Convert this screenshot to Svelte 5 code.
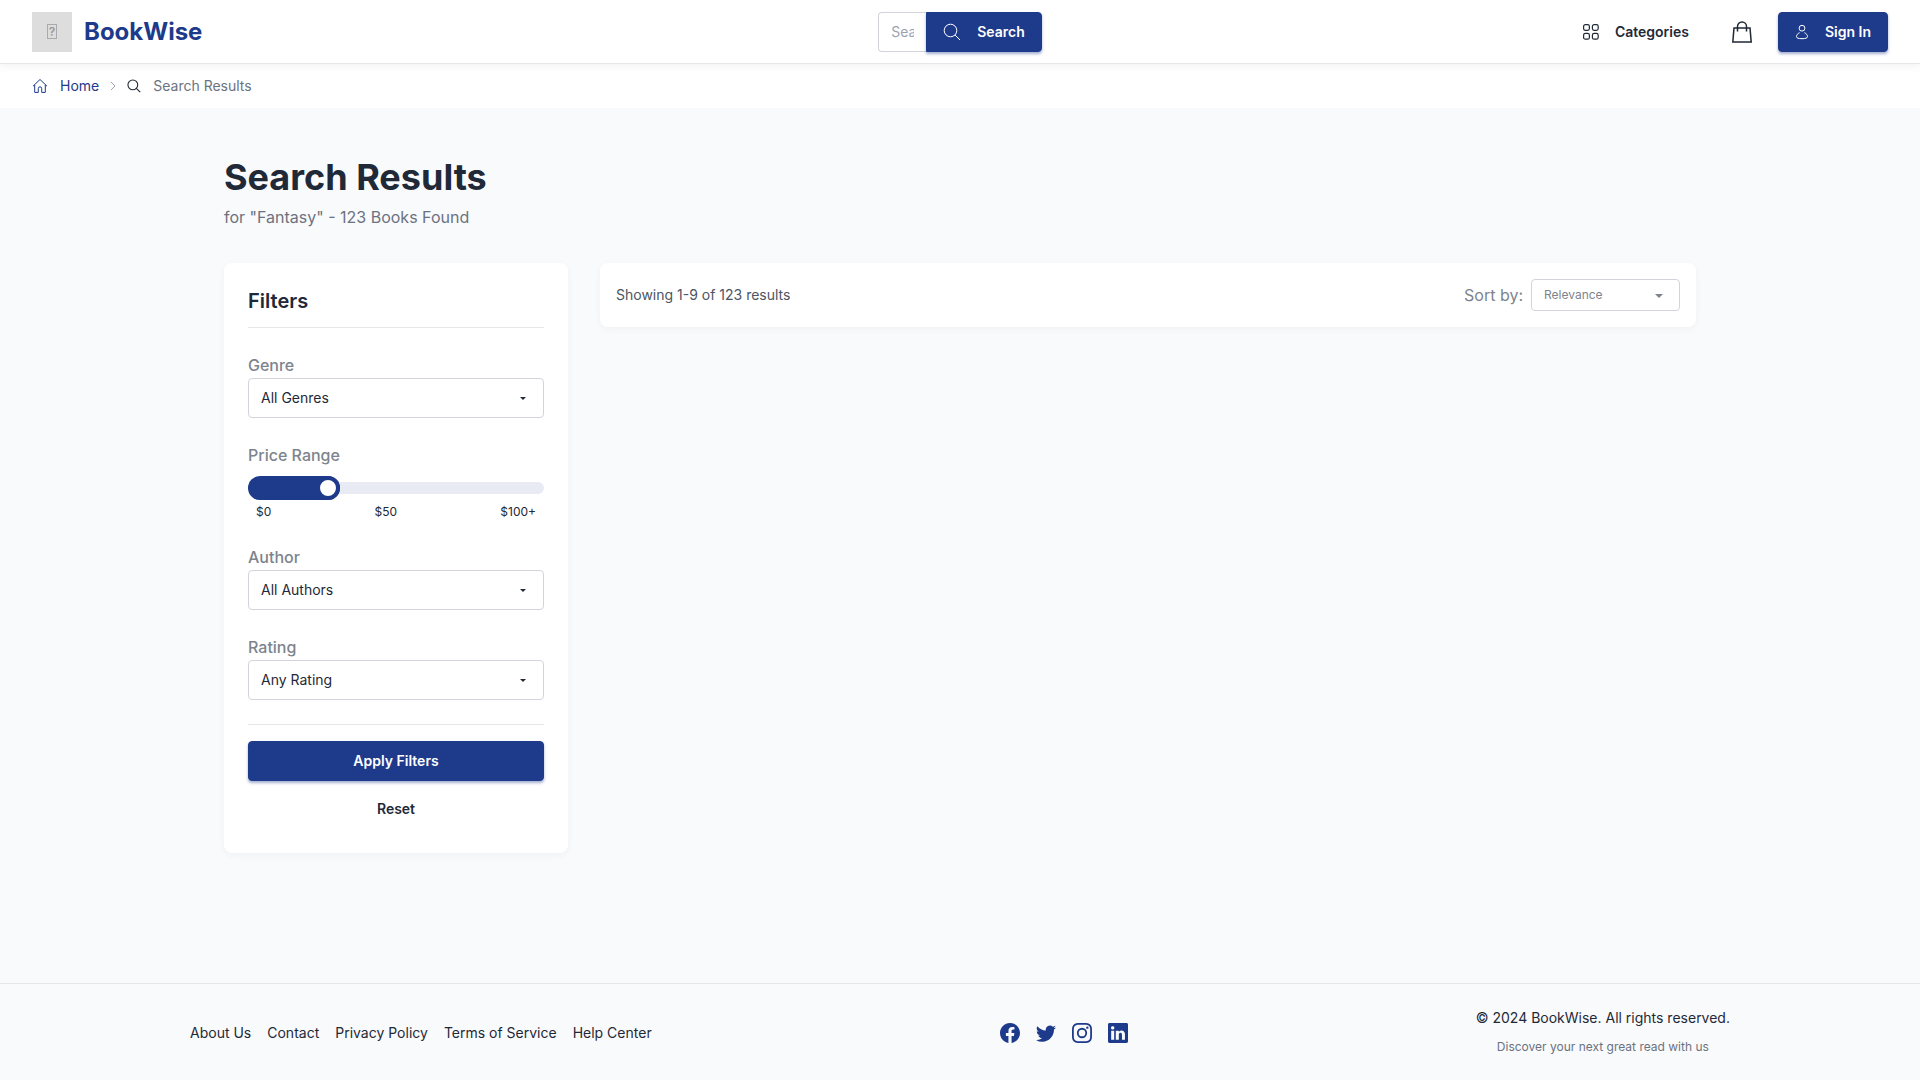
<script>
  const filters = [
    { id: 'genre', label: 'Genre', options: ['All Genres'] },
    { id: 'price', label: 'Price Range' },
    { id: 'author', label: 'Author', options: ['All Authors'] },
    { id: 'rating', label: 'Rating', options: ['Any Rating'] },
  ];
  const footerLinks = ['About Us', 'Contact', 'Privacy Policy', 'Terms of Service', 'Help Center'];
  const socials = [
    { name: 'Facebook', d: 'M16 8.05C16 3.6 12.42 0 8 0S0 3.6 0 8.05C0 12.07 2.93 15.4 6.75 16v-5.62H4.72V8.05h2.03V6.28c0-2.02 1.2-3.13 3.02-3.13.88 0 1.8.16 1.8.16v1.98h-1.01c-1 0-1.31.62-1.31 1.26v1.5h2.22l-.35 2.33H9.25V16C13.07 15.4 16 12.07 16 8.05' },
    { name: 'Twitter', d: 'M5.03 15c6.04 0 9.34-5 9.34-9.33q.002-.212-.006-.422A6.7 6.7 0 0 0 16 3.54a6.7 6.7 0 0 1-1.89.52 3.3 3.3 0 0 0 1.45-1.82 6.5 6.5 0 0 1-2.09.79A3.29 3.29 0 0 0 7.88 6.03 9.32 9.32 0 0 1 1.11 2.6 3.29 3.29 0 0 0 2.13 6.98 3.2 3.2 0 0 1 .64 6.57v.04a3.29 3.29 0 0 0 2.63 3.22 3.2 3.2 0 0 1-.86.12 3 3 0 0 1-.62-.06 3.29 3.29 0 0 0 3.07 2.28A6.6 6.6 0 0 1 0 13.53 9.3 9.3 0 0 0 5.03 15' },
    { name: 'Instagram', d: 'M8 0C5.83 0 5.56.01 4.7.05 3.85.09 3.27.22 2.76.42A3.9 3.9 0 0 0 1.34 1.34 3.9 3.9 0 0 0 .42 2.76C.22 3.27.09 3.85.05 4.7.01 5.56 0 5.83 0 8s.01 2.44.05 3.3c.04.85.17 1.43.37 1.94.2.53.47.97.92 1.42.45.45.89.72 1.42.92.51.2 1.09.33 1.94.37C5.56 15.99 5.83 16 8 16s2.44-.01 3.3-.05c.85-.04 1.43-.17 1.94-.37a3.9 3.9 0 0 0 1.42-.92c.45-.45.72-.89.92-1.42.2-.51.33-1.09.37-1.94.04-.86.05-1.13.05-3.3s-.01-2.44-.05-3.3c-.04-.85-.17-1.43-.37-1.94a3.9 3.9 0 0 0-.92-1.42A3.9 3.9 0 0 0 13.24.42C12.73.22 12.15.09 11.3.05 10.44.01 10.17 0 8 0m0 1.44c2.14 0 2.39.01 3.23.05.78.04 1.2.17 1.49.28.37.14.64.32.92.6s.45.55.6.92c.11.28.24.7.28 1.49.04.84.05 1.09.05 3.23s-.01 2.39-.05 3.23c-.04.78-.17 1.2-.28 1.49-.14.37-.32.64-.6.92s-.55.45-.92.6c-.28.11-.7.24-1.49.28-.84.04-1.09.05-3.23.05s-2.39-.01-3.23-.05c-.78-.04-1.2-.17-1.49-.28a2.5 2.5 0 0 1-.92-.6 2.5 2.5 0 0 1-.6-.92c-.11-.28-.24-.7-.28-1.49-.04-.84-.05-1.09-.05-3.23s.01-2.39.05-3.23c.04-.78.17-1.2.28-1.49.14-.37.32-.64.6-.92s.55-.45.92-.6c.28-.11.7-.24 1.49-.28.84-.04 1.09-.05 3.23-.05m4.27 1.33a.96.96 0 1 0 0 1.92.96.96 0 0 0 0-1.92M8 3.89a4.11 4.11 0 1 0 0 8.22 4.11 4.11 0 0 0 0-8.22m0 1.44a2.67 2.67 0 1 1 0 5.34 2.67 2.67 0 0 1 0-5.34' },
    { name: 'LinkedIn', d: 'M0 1.15C0 .51.53 0 1.18 0h13.64C15.47 0 16 .51 16 1.15v13.7c0 .63-.53 1.15-1.18 1.15H1.18C.53 16 0 15.48 0 14.85zm4.94 12.24V6.17h-2.4v7.22zM3.74 5.18c.84 0 1.36-.55 1.36-1.25-.02-.7-.52-1.24-1.34-1.24s-1.36.54-1.36 1.25c0 .69.52 1.24 1.33 1.24zm4.91 8.21V9.36c0-.21.02-.43.08-.59.17-.43.57-.88 1.23-.88.86 0 1.21.66 1.21 1.63v3.87h2.4V9.25c0-2.22-1.18-3.25-2.76-3.25-1.28 0-1.84.7-2.16 1.19v.03h-.02l.02-.03V6.17h-2.4c.03.68 0 7.22 0 7.22z' },
  ];
  let price = $state(25);
  // The fill ends at the outer edge of the 24px thumb.
  const fill = $derived(`calc(24px + (100% - 24px) * ${price / 100})`);
</script>

{#snippet searchIcon(cls)}
  <svg class={cls} viewBox="0 0 18 18" aria-hidden="true"><circle cx="7.5" cy="7.5" r="6.3" /><path d="M12 12l5 5" /></svg>
{/snippet}

<div class="page">
  <header class="header">
    <a class="brand" href="/">
      <span class="logo" aria-hidden="true"><span class="glyph">?</span></span>
      <span class="name">BookWise</span>
    </a>
    <form class="search" onsubmit={(e) => e.preventDefault()}>
      <input type="text" placeholder="Search for books" aria-label="Search for books" />
      <button class="btn primary" type="submit">{@render searchIcon('icon-search')}Search</button>
    </form>
    <nav class="actions" aria-label="Main">
      <button class="btn plain" type="button">
        <svg class="icon-grid" viewBox="0 0 16 16" aria-hidden="true">
          <rect x=".6" y=".6" width="5.8" height="5.8" rx="1.8" /><rect x="9.4" y=".6" width="5.8" height="5.8" rx="1.8" />
          <rect x=".6" y="9.4" width="5.8" height="5.8" rx="1.8" /><rect x="9.4" y="9.4" width="5.8" height="5.8" rx="1.8" />
        </svg>
        Categories
      </button>
      <button class="btn bag" type="button" aria-label="Cart">
        <svg viewBox="0 0 24 24" aria-hidden="true"><path d="M4 8h16l1.2 14H2.8zM7.5 11.500V6.500a4.500 4.500 0 0 1 9 0v5" /></svg>
      </button>
      <button class="btn primary" type="button">
        <svg class="icon-user" viewBox="0 0 14 16" aria-hidden="true"><circle cx="7" cy="4.200" r="2.900" /><path d="M4.600 8.700C2.600 9.600 1.500 11 1.500 12.700c0 1.300 2 2 5.500 2s5.500-.7 5.500-2c0-1.700-1.100-3.100-3.100-4" /></svg>
        Sign In
      </button>
    </nav>
  </header>

  <nav class="crumbs" aria-label="Breadcrumb">
    <a href="/">
      <svg class="icon-home" viewBox="0 0 16 16" aria-hidden="true"><path d="M1 8.200L8 1.500l7 6.700M2.700 7v7.400h3.600V10.500a1.700 1.700 0 0 1 3.400 0v3.900h3.600V7" /></svg>
      Home
    </a>
    <svg class="icon-chevron" viewBox="0 0 6 10" aria-hidden="true"><path d="M1 1l4 4-4 4" /></svg>
    <span>{@render searchIcon('icon-crumb')}Search Results</span>
  </nav>

  <main>
    <h1>Search Results</h1>
    <p class="summary">for "Fantasy" - 123 Books Found</p>
    <div class="columns">
      <aside class="card filters">
        <h2>Filters</h2>
        {#each filters as f (f.id)}
          <div class="field">
            <label for={f.id}>{f.label}</label>
            {#if f.options}
              <div class="select">
                <select id={f.id}>
                  {#each f.options as o (o)}<option>{o}</option>{/each}
                </select>
                <svg viewBox="0 0 8 6" aria-hidden="true"><path d="M1 2h6L4 5z" /></svg>
              </div>
            {:else}
              <div class="slider">
                <span class="track"></span>
                <span class="fill" style:width={fill}></span>
                <input id={f.id} type="range" min="0" max="100" bind:value={price} />
              </div>
              <div class="marks"><span>$0</span><span>$50</span><span>$100+</span></div>
            {/if}
          </div>
        {/each}
        <div class="buttons">
          <button class="btn primary" type="button">Apply Filters</button>
          <button class="btn plain" type="reset">Reset</button>
        </div>
      </aside>
      <section class="card toolbar">
        <span class="count">Showing 1-9 of 123 results</span>
        <div class="sort">
          <label for="sort">Sort by:</label>
          <div class="select small">
            <select id="sort"><option>Relevance</option></select>
            <svg viewBox="0 0 8 6" aria-hidden="true"><path d="M0 2h8L4 6z" /></svg>
          </div>
        </div>
      </section>
    </div>
  </main>

  <footer>
    <nav class="links" aria-label="Footer">
      {#each footerLinks as l (l)}<a href="/">{l}</a>{/each}
    </nav>
    <div class="socials">
      {#each socials as s (s.name)}
        <a href="/" aria-label={s.name}><svg viewBox="0 0 16 16" aria-hidden="true"><path fill-rule="evenodd" d={s.d} /></svg></a>
      {/each}
    </div>
    <div class="legal">
      <p>© 2024 BookWise. All rights reserved.</p>
      <p class="tagline">Discover your next great read with us</p>
    </div>
  </footer>
</div>

<style>
  :global(body) { margin: 0; }
  .page, .page * { box-sizing: border-box; }
  .page {
    min-height: 100vh;
    display: flex;
    flex-direction: column;
    background: #f9fafc;
    color: #1f2937;
    font: 14px/20px Inter, sans-serif;
  }
  h1, h2, p { margin: 0; }
  a { color: inherit; text-decoration: none; }
  button, input, select { font: inherit; color: inherit; margin: 0; }
  svg { display: block; flex: none; fill: none; stroke: currentColor; }

  .header {
    position: relative;
    display: grid;
    grid-template-columns: 1fr auto 1fr;
    align-items: center;
    height: 64px;
    padding: 0 32px;
    background: #fff;
    border-bottom: 1px solid #e5e7eb;
    box-shadow: 0 2px 8px rgba(0, 0, 0, 0.06);
  }
  .brand { display: flex; align-items: center; gap: 12px; }
  .logo {
    display: grid;
    place-items: center;
    width: 40px;
    height: 40px;
    background: #ddd;
    color: #999;
  }
  .glyph {
    width: 10px;
    height: 15px;
    border: 1px solid #aaa;
    font-size: 12px;
    line-height: 13px;
    font-weight: 600;
    text-align: center;
  }
  .name { color: #1e3a8a; font-size: 24px; line-height: 32px; font-weight: 700; }

  .btn {
    display: flex;
    align-items: center;
    justify-content: center;
    gap: 16px;
    height: 40px;
    padding: 0 16px;
    border: 1px solid transparent;
    border-radius: 4px;
    background: transparent;
    font-weight: 600;
    cursor: pointer;
  }
  .primary {
    background: #1e3a8a;
    border-color: #1e3a8a;
    color: #fff;
    box-shadow: 0 2px 3px rgba(30, 58, 138, 0.4);
  }
  .search { display: flex; }
  .search input {
    width: 48px;
    height: 40px;
    padding: 0 12px;
    border: 1px solid #d1d5db;
    border-right: 0;
    border-radius: 4px 0 0 4px;
    background: #fff;
  }
  .search input::placeholder { color: #9ca3af; opacity: 1; }
  .search .btn { border-radius: 0 4px 4px 0; }
  .icon-search { width: 18px; height: 18px; }
  .actions { display: flex; justify-content: flex-end; gap: 16px; }
  .bag { width: 40px; padding: 0; }
  .bag svg { width: 24px; height: 24px; stroke-width: 1.5; }
  .icon-grid { width: 16px; height: 16px; stroke-width: 1.2; }
  .icon-user { width: 14px; height: 16px; }

  .crumbs {
    display: flex;
    align-items: center;
    gap: 11px;
    height: 44px;
    padding: 0 32px;
    background: #fff;
    color: #6b7280;
  }
  .crumbs a, .crumbs span { display: flex; align-items: center; gap: 12px; }
  .crumbs a { color: #1e3a8a; }
  .icon-home { width: 16px; height: 16px; }
  .icon-chevron { width: 6px; height: 10px; color: #9ca3af; }
  .icon-crumb { width: 14px; height: 14px; color: #1f2937; stroke-width: 1.4; }

  main {
    flex: 1;
    width: 100%;
    max-width: 1536px;
    margin: 0 auto;
    padding: 48px 32px;
  }
  h1 { font-size: 36px; line-height: 42px; font-weight: 700; }
  .summary { margin-top: 7px; color: #6b7280; font-size: 16px; line-height: 24px; }
  .columns {
    display: grid;
    grid-template-columns: 344px 1fr;
    align-items: start;
    gap: 32px;
    margin-top: 34px;
  }
  .card { background: #fff; border-radius: 8px; box-shadow: 0 2px 8px rgba(0, 0, 0, 0.04); }
  .filters { padding: 24px; }
  h2 {
    padding-bottom: 12px;
    border-bottom: 1px solid #e5e7eb;
    font-size: 20px;
    line-height: 28px;
    font-weight: 600;
  }
  .field { margin-top: 24px; }
  label { display: block; color: #7d848e; font-size: 16px; line-height: 26px; }
  .field label { font-weight: 500; }
  .select { display: grid; align-items: center; }
  .select > * { grid-area: 1 / 1; }
  select {
    appearance: none;
    width: 100%;
    height: 40px;
    padding: 0 12px;
    border: 1px solid #d1d5db;
    border-radius: 4px;
    background: #fff;
  }
  .select svg {
    justify-self: end;
    width: 8px;
    height: 6px;
    margin-right: 17px;
    fill: currentColor;
    stroke: none;
    pointer-events: none;
  }
  .slider { display: grid; align-items: center; margin-top: 8px; }
  .slider > * { grid-area: 1 / 1; }
  .track { height: 12px; border-radius: 6px; background: #e8ebf4; }
  .fill { height: 24px; border-radius: 12px; background: #1e3a8a; }
  .slider input { appearance: none; width: 100%; height: 24px; background: transparent; }
  .slider input::-webkit-slider-thumb {
    appearance: none;
    width: 24px;
    height: 24px;
    border: 4px solid #1e3a8a;
    border-radius: 50%;
    background: #fff;
  }
  .marks { display: flex; justify-content: space-between; padding: 4px 8px 0; font-size: 12px; line-height: 16px; }
  .buttons {
    display: grid;
    gap: 8px;
    margin-top: 24px;
    padding-top: 16px;
    border-top: 1px solid #e5e7eb;
  }

  .toolbar { display: flex; align-items: center; justify-content: space-between; padding: 16px; }
  .count { color: #4b5563; }
  .sort { display: flex; align-items: center; gap: 8px; }
  .small { width: 149px; color: #7d848e; }
  .small select { height: 32px; font-size: 12px; }

  footer {
    display: flex;
    align-items: center;
    justify-content: space-around;
    padding: 22px 16px 21px;
    border-top: 1px solid #e5e7eb;
  }
  .links, .socials { display: flex; gap: 16px; }
  .socials svg { width: 20px; height: 20px; fill: #1e3a8a; stroke: none; }
  .legal { text-align: center; line-height: 24px; }
  .tagline { margin-top: 5px; color: #6b7280; font-size: 12px; }
</style>
